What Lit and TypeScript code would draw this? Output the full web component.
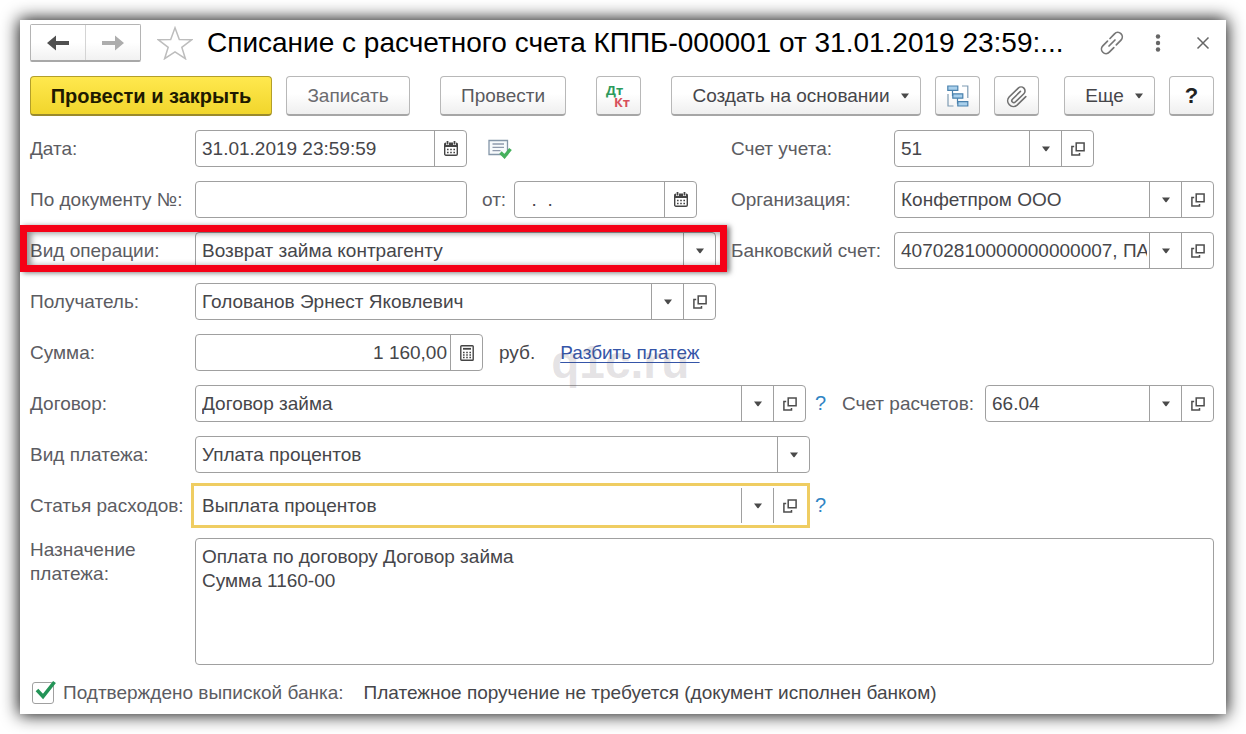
import { LitElement, html, css, nothing } from "lit";
import { customElement, property } from "lit/decorators.js";

const base = css`
  *, *::before, *::after { box-sizing: border-box; }
  button, input, select, textarea { font: inherit; color: inherit; margin: 0; }
  button { cursor: pointer; }
  svg { display: block; flex: none; }
`;

const caret = html`<svg width="10" height="6" viewBox="0 0 10 6" aria-hidden="true"><path d="M1 .5h8L5.6 5a.8.8 0 0 1-1.2 0z" fill="#4a4a4a"/></svg>`;
const openIcon = html`<svg width="14" height="14" viewBox="0 0 14 14" fill="none" stroke="#4d4d4d" stroke-width="1.5" aria-hidden="true"><path d="M5.2.9h7.9v7.9H5.2z"/><path d="M3.2 4.6H.9v8.5h7.6v-2.2"/></svg>`;
const calendarIcon = html`<svg width="14" height="15" viewBox="0 0 14 15" aria-hidden="true">
  <rect x=".7" y="2.2" width="12.6" height="12" rx="1.2" fill="none" stroke="#444" stroke-width="1.4"/>
  <path d="M.7 2h12.6v4H.7z" fill="#444"/>
  <path d="M3.5 0v4M10.5 0v4" stroke="#fff" stroke-width="3"/><path d="M3.5 0v3.4M10.5 0v3.4" stroke="#444" stroke-width="1.8"/>
  <path d="M3 8.6h8M3 11.4h8" stroke="#444" stroke-width="1.5" stroke-dasharray="1.6 1.6"/></svg>`;
const calcIcon = html`<svg width="14" height="16" viewBox="0 0 14 16" aria-hidden="true">
  <rect x=".8" y=".8" width="12.4" height="14.4" rx=".8" fill="none" stroke="#444" stroke-width="1.4"/>
  <path d="M3 3.8h8" stroke="#444" stroke-width="1.8"/>
  <path d="M3 7.4h8M3 10h8M3 12.6h8" stroke="#444" stroke-width="1.5" stroke-dasharray="1.6 1.6"/></svg>`;

@customElement("form-field")
class FormField extends LitElement {
  @property() label = "";
  @property() value = "";
  @property() kind = "text";
  @property() align = "left";
  @property({ type: Boolean }) active = false;

  static styles = [base, css`
    :host { display: block; min-width: 0; }
    .box {
      display: flex; height: 37px; background: #fff;
      border: 1px solid #a0a0a0; border-radius: 4px;
    }
    .box.active { border-color: transparent; outline: 3px solid #efcd62; outline-offset: 1px; border-radius: 0; }
    input, select {
      flex: 1; width: 0; min-width: 0; border: 0; outline: 0; background: transparent;
      padding: 0 2px 0 6px; appearance: none; border-radius: 0;
    }
    .end { text-align: right; padding-right: 3px; }
    .addon {
      flex: none; width: 32px; display: flex; align-items: center; justify-content: center;
      padding: 0; border: 0; border-left: 1px solid #a0a0a0; background: none;
    }
    .picker { display: grid; flex: 1; min-width: 0; grid-template-columns: minmax(0, 1fr) 32px; }
    .picker select { grid-area: 1 / 1 / 2 / 3; width: 100%; }
    .picker .addon { grid-area: 1 / 2; pointer-events: none; }
  `];

  private addon(name: string, icon: unknown) {
    return html`<button class="addon" type="button" aria-label="${name}">${icon}</button>`;
  }

  render() {
    if (this.kind === "select") {
      return html`<div class="box"><div class="picker">
        <select aria-label=${this.label}><option>${this.value}</option></select>
        <span class="addon">${caret}</span>
      </div></div>`;
    }
    return html`<div class="box ${this.active ? "active" : ""}">
      <input type="text" class=${this.align === "right" ? "end" : ""} aria-label=${this.label} .value=${this.value}>
      ${this.kind === "date" ? this.addon("Календарь", calendarIcon) : nothing}
      ${this.kind === "sum" ? this.addon("Калькулятор", calcIcon) : nothing}
      ${this.kind === "ref" ? html`${this.addon("Выбрать", caret)}${this.addon("Открыть", openIcon)}` : nothing}
    </div>`;
  }
}

@customElement("app-root")
class AppRoot extends LitElement {
  static styles = [base, css`
    :host {
      display: block; min-height: 100vh; padding: 20px; box-sizing: border-box; background: #fff;
      font: 19px/24px "Liberation Sans", Arial, sans-serif; color: #46464a;
    }
    .window {
      display: flex; flex-direction: column; gap: 14px; background: #fff;
      padding: 4px 12px 8px 10px; box-shadow: 0 0 16px 1px rgba(0, 0, 0, .95);
    }
    .titlebar { display: flex; align-items: center; height: 38px; }
    .nav { display: flex; height: 38px; width: 111px; border: 1px solid #b4b4b4; border-bottom: 2px solid #a8a8a8; border-radius: 2px; }
    .nav button { flex: 1; display: flex; align-items: center; justify-content: center; padding: 0; border: 0; background: linear-gradient(#fff 50%, #f1f1f1); }
    .nav button + button { border-left: 1px solid #d4d4d4; }
    .star { margin: 0 14px 0 16px; }
    .ghost { padding: 0; border: 0; background: none; display: flex; align-items: center; justify-content: center; }
    h1 { flex: 1; min-width: 0; margin: 0; font-size: 28px; line-height: 36px; font-weight: 400; color: #000; white-space: nowrap; overflow: hidden; }
    .tools { display: flex; align-items: center; gap: 31px; padding-right: 4px; }
    .toolbar { display: flex; height: 40px; }
    .btn {
      display: flex; align-items: center; justify-content: center; gap: 10px; height: 40px; padding: 0; flex: none;
      border: 1px solid #b8b8b8; border-bottom: 2px solid #a6a6a6; border-radius: 4px;
      background: linear-gradient(#fff 45%, #efefef); white-space: nowrap;
    }
    .primary { width: 242px; font-size: 20px; font-weight: 700; color: #1e1a00; border-color: #b39f2a; border-bottom-color: #9a8a2c; background: linear-gradient(#ffe84e, #f1d62c); }
    .save { width: 124px; color: #6c6c70; }
    .post { width: 126px; color: #5a5a5e; }
    .icon { width: 45px; }
    .gap { margin-left: 14px; }
    .wide { margin-left: 30px; }
    .create { width: 250px; padding-left: 10px; }
    .spring { flex: 1; }
    .more { width: 91px; padding-left: 10px; }
    .help { font-weight: 700; color: #222; font-size: 22px; }
    .row { display: grid; grid-template-columns: minmax(0, 1fr) 483px; gap: 15px; }
    .lower { grid-template-columns: minmax(0, 1fr) 372px; gap: 32px; }
    .cell { display: flex; align-items: center; min-width: 0; position: relative; }
    .name { flex: none; width: 165px; color: #5c5c62; white-space: nowrap; }
    .cell.right .name { width: 163px; }
    .lower .cell.right .name { width: 143px; }
    .grow { flex: 1; }
    .w-mid { width: 272px; }
    .w-acc { width: 200px; }
    .w-date { width: 183px; }
    .w-sum { width: 288px; }
    .status { margin-left: 21px; }
    .from { width: 47px; padding-left: 15px; flex: none; color: #5c5c62; }
    .unit { margin: 0 25px 0 16px; }
    .ref { padding-right: 4px; }
    a { color: #3555a8; text-underline-offset: 3px; text-decoration-thickness: 1px; }
    .linkwrap { position: relative; white-space: nowrap; }
    .mark { position: absolute; z-index: 1; left: -9px; top: -2px; font-size: 46px; line-height: 46px; font-weight: 700; color: rgba(90, 80, 90, .17); pointer-events: none; }
    .hint { position: absolute; left: 100%; top: 6px; margin-left: 5px; color: #2f84c4; font-size: 20px; }
    .frame {
      position: absolute; top: -7px; bottom: -3px; left: -10px; right: -11px; border: 7px solid #f50016; pointer-events: none;
      box-shadow: 3px 1px 5px rgba(0, 0, 0, .5), inset 4px 1px 6px rgba(0, 0, 0, .45);
    }
    .purpose { display: flex; }
    textarea {
      flex: 1; min-width: 0; height: 127px; border: 1px solid #a0a0a0; border-radius: 4px; resize: none; outline: 0;
      padding: 6px; background: #fff;
    }
    .confirm { display: flex; align-items: center; height: 27px; }
    .tick { position: relative; display: flex; margin: 0 9px 0 2px; }
    .tick input { appearance: none; width: 22px; height: 22px; border: 1px solid #a0a0a0; border-radius: 3px; }
    .tick svg { position: absolute; left: 3px; top: -2px; pointer-events: none; }
    .confirm label { color: #5c5c62; margin-right: 20px; white-space: nowrap; }
  `];

  private field(label: string, value: string, kind: string, cls: string, active = false) {
    return html`<form-field class=${cls} label=${label} value=${value} kind=${kind} align=${kind === "sum" ? "right" : "left"} ?active=${active}></form-field>`;
  }

  render() {
    return html`<main class="window">
      <header class="titlebar">
        <div class="nav">
          <button type="button" aria-label="Назад"><svg width="22" height="16" viewBox="0 0 22 16"><path d="M0 8l9-7.600v5.600h13v4H9v5.600z" fill="#505050"/></svg></button>
          <button type="button" aria-label="Вперед"><svg width="22" height="16" viewBox="0 0 22 16"><path d="M22 8l-9-7.600v5.600H0v4h13v5.600z" fill="#adadad"/></svg></button>
        </div>
        <button class="ghost star" type="button" aria-label="В избранное"><svg width="36" height="34" viewBox="0 0 36 34"><path d="M18 1.800l4.300 11.600 12.300.4-9.800 7.500 3.600 11.400L18 25.800 7.600 32.700l3.600-11.400L1.400 13.800l12.300-.4z" fill="none" stroke="#bdbdbd" stroke-width="1.500"/></svg></button>
        <h1>Списание с расчетного счета КППБ-000001 от 31.01.2019 23:59:...</h1>
        <div class="tools">
          <button class="ghost" type="button" aria-label="Ссылка"><svg width="24" height="24" viewBox="0 0 24 24" fill="none" stroke="#777" stroke-width="1.700" stroke-linecap="round"><path d="M10 7.500l4.500-4.700a4.500 4.500 0 0 1 6.500 6.300l-4.700 4.700M13.800 16.600l-4.500 4.600a4.500 4.500 0 0 1-6.500-6.400l4.700-4.600M9 15l6-6"/></svg></button>
          <button class="ghost" type="button" aria-label="Меню"><svg width="10" height="18" viewBox="0 0 10 18" fill="#666"><circle cx="3" cy="2.500" r="2.200"/><circle cx="3" cy="9" r="2.200"/><circle cx="3" cy="15.500" r="2.200"/></svg></button>
          <button class="ghost" type="button" aria-label="Закрыть"><svg width="14" height="14" viewBox="0 0 14 14"><path d="M1.500 1.500l11 11M12.500 1.500l-11 11" stroke="#666" stroke-width="1.500"/></svg></button>
        </div>
      </header>

      <div class="toolbar">
        <button class="btn primary" type="button">Провести и закрыть</button>
        <button class="btn save gap" type="button">Записать</button>
        <button class="btn post wide" type="button">Провести</button>
        <button class="btn icon wide" type="button" aria-label="Дебет и кредит"><svg width="32" height="36" viewBox="0 0 32 36" font-family="Open Sans, sans-serif" font-weight="700" font-size="13"><text x="3" y="17" fill="#2c9a5c">Дт</text><text x="11" y="29" fill="#d8505c">Кт</text></svg></button>
        <button class="btn create wide" type="button">Создать на основании ${caret}</button>
        <button class="btn icon gap" type="button" aria-label="Структура подчиненности"><svg width="22" height="22" viewBox="0 0 22 22"><g fill="#a9d0ec" stroke="#4a81ad" stroke-width="1.200"><path d="M.8 1h10v4.400H.8zM5.800 8.800h10v4.400h-10zM10.800 16.600h10V21h-10z"/></g><path d="M5.500 5.400V11M10.500 13.200v5.600" stroke="#4a81ad" stroke-width="1.200" fill="none"/><path d="M15 1h5.800v12M1 9v12h5.500" fill="none" stroke="#7f9cb3" stroke-width="1.200"/></svg></button>
        <button class="btn icon gap" type="button" aria-label="Файлы"><svg width="24" height="24" viewBox="1 0 21 21" fill="none" stroke="#707070" stroke-width="1.400" stroke-linecap="round"><path d="M14.500 6.500l-7 6.800a1.700 1.700 0 0 0 2.500 2.500l7.500-7.300a3.400 3.400 0 0 0-4.900-4.900l-8 7.800a5 5 0 0 0 7 7.100l7.600-7.500"/></svg></button>
        <span class="spring"></span>
        <button class="btn more" type="button">Еще ${caret}</button>
        <button class="btn icon help gap" type="button">?</button>
      </div>

      <div class="row">
        <div class="cell"><span class="name">Дата:</span>${this.field("Дата", "31.01.2019 23:59:59", "date", "w-mid")}
          <svg class="status" width="24" height="20" viewBox="0 0 24 20"><path d="M1 1.500h18.500v14H1z" fill="#f7fafc" stroke="#8496a8" stroke-width="1.300"/><path d="M4.500 5h11.500M4.500 8.300h11.500M4.500 11.600h8" stroke="#8f9aac" stroke-width="1.300"/><path d="M12.500 13.500l4 4 6-7.500" fill="none" stroke="#45b05c" stroke-width="3.400"/></svg>
        </div>
        <div class="cell right"><span class="name">Счет учета:</span>${this.field("Счет учета", "51", "ref", "w-acc")}</div>
      </div>
      <div class="row">
        <div class="cell"><span class="name">По документу №:</span>${this.field("По документу №", "", "text", "w-mid")}<span class="from">от:</span>${this.field("от", "  .  .", "date", "w-date")}</div>
        <div class="cell right"><span class="name">Организация:</span>${this.field("Организация", "Конфетпром ООО", "ref", "grow")}</div>
      </div>
      <div class="row">
        <div class="cell"><span class="name">Вид операции:</span>${this.field("Вид операции", "Возврат займа контрагенту", "select", "grow")}<span class="frame"></span></div>
        <div class="cell right"><span class="name">Банковский счет:</span>${this.field("Банковский счет", "40702810000000000007, ПА", "ref", "grow")}</div>
      </div>
      <div class="row">
        <div class="cell"><span class="name">Получатель:</span>${this.field("Получатель", "Голованов Эрнест Яковлевич", "ref", "grow")}</div>
      </div>
      <div class="row">
        <div class="cell"><span class="name">Сумма:</span>${this.field("Сумма", "1 160,00", "sum", "w-sum")}<span class="unit">руб.</span><span class="linkwrap"><a href="#">Разбить платеж</a><span class="mark" aria-hidden="true">q1c.ru</span></span></div>
      </div>
      <div class="row lower">
        <div class="cell ref"><span class="name">Договор:</span>${this.field("Договор", "Договор займа", "ref", "grow")}<span class="hint">?</span></div>
        <div class="cell right"><span class="name">Счет расчетов:</span>${this.field("Счет расчетов", "66.04", "ref", "grow")}</div>
      </div>
      <div class="row lower">
        <div class="cell"><span class="name">Вид платежа:</span>${this.field("Вид платежа", "Уплата процентов", "select", "grow")}</div>
      </div>
      <div class="row lower">
        <div class="cell ref"><span class="name">Статья расходов:</span>${this.field("Статья расходов", "Выплата процентов", "ref", "grow", true)}<span class="hint">?</span></div>
      </div>
      <div class="purpose">
        <label class="name" for="purpose">Назначение<br>платежа:</label>
        <textarea id="purpose" .value=${"Оплата по договору Договор займа\nСумма 1160-00"}></textarea>
      </div>
      <div class="confirm">
        <span class="tick"><input id="confirmed" type="checkbox" checked><svg width="22" height="20" viewBox="0 0 22 20"><path d="M2 10l6 6.500L19.500 2" fill="none" stroke="#239457" stroke-width="3.600"/></svg></span>
        <label for="confirmed">Подтверждено выпиской банка:</label>
        <span>Платежное поручение не требуется (документ исполнен банком)</span>
      </div>
    </main>`;
  }
}
